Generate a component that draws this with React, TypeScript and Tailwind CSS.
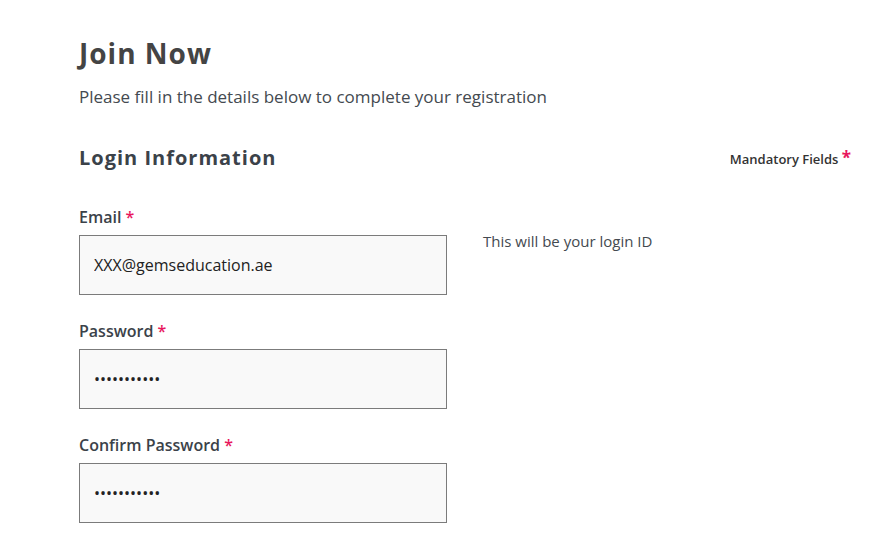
import type { ReactNode } from 'react';

function Field({ label, children, note }: { label: string; children: ReactNode; note?: string }) {
  return (
    <div className="mb-[25px]">
      <p className="mb-[7px] text-[16px] font-semibold leading-[22px] text-[#3b4249]">
        {label} <span className="text-[#e8175d]">*</span>
      </p>
      <div className="flex items-start">
        {children}
        {note ? <p className="ml-[36px] mt-[-4px] text-[15px] leading-[20px] text-[#444a50]">{note}</p> : null}
      </div>
    </div>
  );
}

const inputCls =
  'h-[60px] w-[368px] border border-[#7b7b7b] bg-[#f9f9f9] px-[14px] text-[16px] text-[#222] outline-none';

export default function App() {
  return (
    <div
      className="min-h-screen bg-white pl-[79px] pr-[25px] pt-[36px]"
      style={{ fontFamily: '"Open Sans", "Noto Sans", sans-serif' }}
    >
      <h1 className="text-[28px] font-bold leading-[34px] tracking-[1px] text-[#444]">
        Join Now
      </h1>
      <p className="mt-[16px] text-[17px] leading-[22px] text-[#444a50]">
        Please fill in the details below to complete your registration
      </p>
      <div className="mt-[37px] flex items-center justify-between">
        <h2 className="text-[20px] font-bold leading-[26px] tracking-[1px] text-[#3b4249]">
          Login Information
        </h2>
        <p className="pr-[3px] text-[13px] font-semibold text-[#333]">
          Mandatory Fields <span className="relative top-[0px] text-[17px] font-bold text-[#e8175d]">*</span>
        </p>
      </div>
      <div className="mt-[35px]">
        <Field label="Email" note="This will be your login ID">
          <input className={inputCls} readOnly value="XXX@gemseducation.ae" />
        </Field>
        <Field label="Password">
          <input className={inputCls} type="password" readOnly value="12345678901" />
        </Field>
        <Field label="Confirm Password">
          <input className={inputCls} type="password" readOnly value="12345678901" />
        </Field>
      </div>
    </div>
  );
}
